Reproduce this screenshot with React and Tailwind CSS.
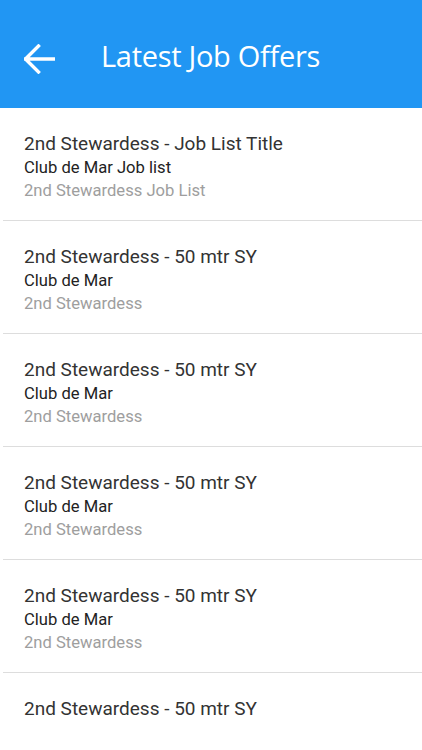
const jobs = [
  {
    title: "2nd Stewardess - Job List Title",
    company: "Club de Mar Job list",
    role: "2nd Stewardess Job List",
  },
  { title: "2nd Stewardess - 50 mtr SY", company: "Club de Mar", role: "2nd Stewardess" },
  { title: "2nd Stewardess - 50 mtr SY", company: "Club de Mar", role: "2nd Stewardess" },
  { title: "2nd Stewardess - 50 mtr SY", company: "Club de Mar", role: "2nd Stewardess" },
  { title: "2nd Stewardess - 50 mtr SY", company: "Club de Mar", role: "2nd Stewardess" },
  // last row is only partly loaded in the screenshot
  { title: "2nd Stewardess - 50 mtr SY" },
];

export default function App() {
  return (
    <div className="w-[422px] h-[750px] overflow-hidden bg-white">
      <header className="h-[108px] bg-[#2196f3] flex items-center pt-[10px]">
        <button className="ml-[24px] w-[31px] h-[30px] flex items-center justify-center">
          <svg width="31" height="30" viewBox="0 0 31 30" fill="none">
            <path
              d="M1.5 15 H30 M14.5 2 L1.5 15 L14.5 28"
              stroke="white"
              strokeWidth="3.4"
              strokeLinecap="square"
              strokeLinejoin="miter"
            />
          </svg>
        </button>
        <h1 className="ml-[46px] text-white text-[29px] font-['Open_Sans',sans-serif] tracking-[-0.3px] -mt-[7px]">
          Latest Job Offers
        </h1>
      </header>

      <ul className="font-['Roboto',sans-serif]">
        {jobs.map((job, i) => (
          <li key={i} className="ml-[3px] h-[113px] border-b border-[#dddddd] pl-[21px] pt-[24px]">
            <p className="text-[19px] leading-[24px] text-[#333333]">{job.title}</p>
            {job.company && (
              <p className="text-[16.6px] leading-[23px] text-[#222222]">{job.company}</p>
            )}
            {job.role && (
              <p className="text-[16.6px] leading-[23px] text-[#9e9e9e]">{job.role}</p>
            )}
          </li>
        ))}
      </ul>
    </div>
  );
}
